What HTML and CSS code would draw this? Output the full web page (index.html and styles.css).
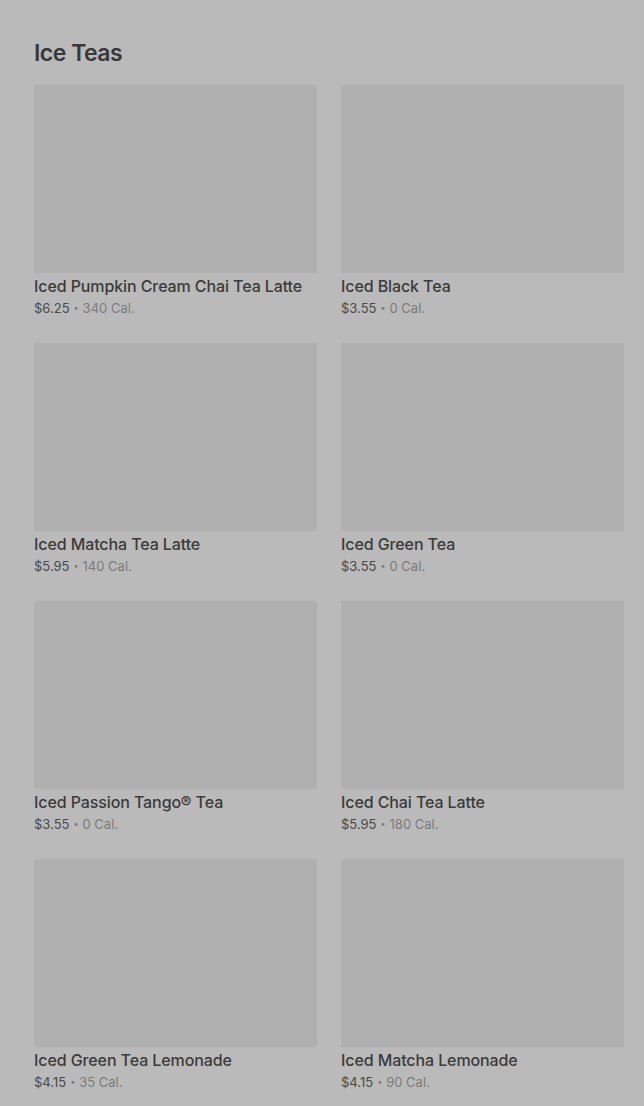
FILE: index.html
```html
<!DOCTYPE html>
<html lang="en">
<head>
<meta charset="utf-8">
<title>Ice Teas</title>
<link rel="stylesheet" href="styles.css">
</head>
<body>
<section class="section">
  <h2 class="section-title">Ice Teas</h2>
  <div class="grid">
    <div class="card"><div class="thumb"></div><div class="name">Iced Pumpkin Cream Chai Tea Latte</div><div class="meta"><span class="price">$6.25</span><span class="dot">•</span><span class="cal">340 Cal.</span></div></div>
    <div class="card"><div class="thumb"></div><div class="name">Iced Black Tea</div><div class="meta"><span class="price">$3.55</span><span class="dot">•</span><span class="cal">0 Cal.</span></div></div>
    <div class="card"><div class="thumb"></div><div class="name">Iced Matcha Tea Latte</div><div class="meta"><span class="price">$5.95</span><span class="dot">•</span><span class="cal">140 Cal.</span></div></div>
    <div class="card"><div class="thumb"></div><div class="name">Iced Green Tea</div><div class="meta"><span class="price">$3.55</span><span class="dot">•</span><span class="cal">0 Cal.</span></div></div>
    <div class="card"><div class="thumb"></div><div class="name">Iced Passion Tango® Tea</div><div class="meta"><span class="price">$3.55</span><span class="dot">•</span><span class="cal">0 Cal.</span></div></div>
    <div class="card"><div class="thumb"></div><div class="name">Iced Chai Tea Latte</div><div class="meta"><span class="price">$5.95</span><span class="dot">•</span><span class="cal">180 Cal.</span></div></div>
    <div class="card"><div class="thumb"></div><div class="name">Iced Green Tea Lemonade</div><div class="meta"><span class="price">$4.15</span><span class="dot">•</span><span class="cal">35 Cal.</span></div></div>
    <div class="card"><div class="thumb"></div><div class="name">Iced Matcha Lemonade</div><div class="meta"><span class="price">$4.15</span><span class="dot">•</span><span class="cal">90 Cal.</span></div></div>
  </div>
</section>
</body>
</html>
```

FILE: styles.css
```css
html, body {
  margin: 0;
  padding: 0;
  background: #bababa;
}
body {
  font-family: Inter, "Liberation Sans", sans-serif;
  color: #3b3b3b;
  overflow: hidden;
}
.section {
  padding: 39px 20px 0 34px;
}
.section-title {
  margin: 0 0 18px 0;
  font-size: 23px;
  line-height: 28px;
  font-weight: 600;
  letter-spacing: -0.5px;
  color: #383838;
}
.grid {
  display: grid;
  grid-template-columns: 283px 283px;
  column-gap: 24px;
  row-gap: 24px;
}
.thumb {
  height: 188px;
  background: #b0b0b0;
}
.name {
  font-size: 16px;
  line-height: 24px;
  font-weight: 500;
  letter-spacing: -0.1px;
  color: #3b3b3b;
  margin-top: 1px;
  white-space: nowrap;
}
.meta {
  font-size: 13px;
  line-height: 21px;
  height: 21px;
  overflow: hidden;
  white-space: nowrap;
}
.price {
  color: #4a4a4a;
}
.dot {
  display: inline-block;
  font-size: 9px;
  line-height: 1;
  color: #7c7c7c;
  margin: 0 4px;
  vertical-align: 2px;
}
.cal {
  color: #7c7c7c;
}
```
